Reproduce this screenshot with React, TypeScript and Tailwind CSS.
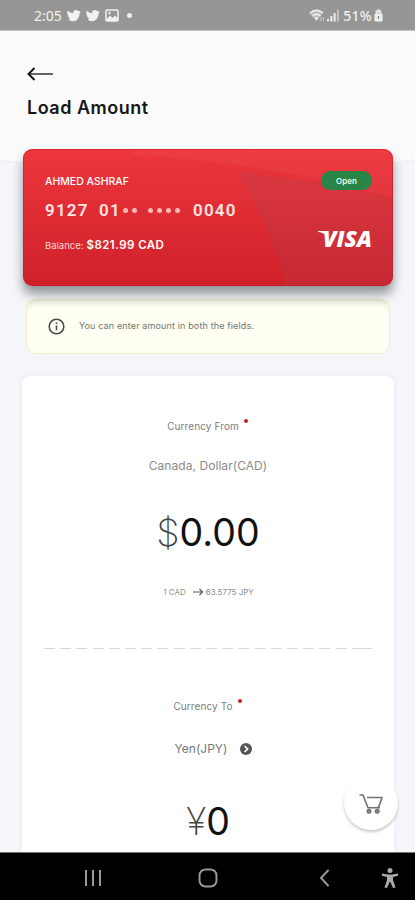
import type { ReactNode } from 'react'

interface FieldLabelProps {
  readonly children: ReactNode
}

const DASHES = Array.from({ length: 19 }, (_, index) => index)

export default function App() {
  return (
    <div className="relative isolate flex h-[900px] w-[415px] flex-col overflow-hidden bg-[#f4f6fa] font-['Inter',sans-serif]">
      <svg
        className="absolute left-0 top-[30px] -z-10"
        width="415"
        height="150"
        viewBox="0 0 415 150"
        fill="none"
      >
        <path d="M0 0H415V129Q208 162 0 129Z" fill="#fbfbfb" />
        <path d="M0 130Q208 163 415 130" stroke="#eeeff1" />
      </svg>

      <StatusBar />

      <header className="flex h-[118px] shrink-0 flex-col items-start pl-[27px] pt-[36px]">
        <button type="button" aria-label="Back">
          <svg width="28" height="14" viewBox="0 0 28 14" fill="none" stroke="#111">
            <path d="M2 7H26" strokeWidth="1.5" stroke="#333" />
            <path d="M7.5 1L1.5 7L7.5 13" strokeWidth="1.9" />
          </svg>
        </button>
        <h1 className="mt-[15px] whitespace-nowrap text-[18px] font-semibold leading-[24px] tracking-[0.5px] text-[#161616]">
          Load Amount
        </h1>
      </header>

      <BankCard />

      <div className="ml-[26px] mt-[12px] flex h-[56px] w-[364px] shrink-0 items-center rounded-[10px] border border-[#f2f0cf] bg-[#fffff4] pl-[21px] shadow-[inset_0_8px_9px_-7px_rgba(90,100,80,0.3)]">
        <svg width="17" height="17" viewBox="0 0 17 17" fill="none" stroke="#4d4c48">
          <circle cx="8.5" cy="8.5" r="7.3" strokeWidth="1.6" />
          <path d="M8.5 7.5V12.3" strokeWidth="1.6" />
          <path d="M8.5 4.4V6" strokeWidth="1.6" />
        </svg>
        <p className="ml-[14px] whitespace-nowrap text-[9px] leading-[14px] tracking-[0.14px] text-[#74746e]">
          You can enter amount in both the fields.
        </p>
      </div>

      <main className="ml-[22px] mt-[22px] flex h-[476px] w-[372px] shrink-0 flex-col items-center rounded-t-[8px] bg-white pt-[42px] shadow-[0_0_4px_rgba(225,228,240,0.6)]">
        <FieldLabel>Currency From</FieldLabel>
        <p className="mt-[24px] whitespace-nowrap text-[12px] leading-[16px] tracking-[0.06px] text-[#8b8b8b]">
          Canada, Dollar(CAD)
        </p>
        <p className="mt-[35px] flex h-[48px] items-center whitespace-nowrap text-[37.5px] leading-[48px] text-[#111]">
          <span className="font-extralight text-[#444]">$</span>
          <span className="tracking-[0.1px]">0.00</span>
        </p>
        <p className="mt-[25px] flex h-[20px] items-center whitespace-nowrap pl-[1px] text-[8px] text-[#8c8c8c]">
          1 CAD
          <svg className="ml-[6px] mr-[2px]" width="12" height="8" viewBox="0 0 12 8" fill="none" stroke="#555">
            <path d="M1 4H10.5M7.5 1L10.5 4L7.5 7" strokeWidth="1.1" />
          </svg>
          <span>63.5775 JPY</span>
        </p>

        <div className="mt-[46px] flex h-px w-[328px] shrink-0 justify-between">
          {DASHES.map(dash => (
            <span key={dash} className="h-px w-[11px] bg-[#d9d9d9]" />
          ))}
          <span className="h-px w-[20px] bg-[#d9d9d9]" />
        </div>

        <div className="mt-[49px]">
          <FieldLabel>Currency To</FieldLabel>
        </div>
        <button
          type="button"
          className="mt-[27px] flex h-[16px] items-center whitespace-nowrap pl-[11px] text-[12px] leading-[16px] tracking-[0.02px] text-[#777]"
        >
          Yen(JPY)
          <svg className="ml-[13px]" width="12" height="12" viewBox="0 0 12 12" fill="none">
            <circle cx="6" cy="6" r="6" fill="#555" />
            <path d="M4.6 3L7.6 6L4.6 9" stroke="#fff" strokeWidth="1.7" />
          </svg>
        </button>
        <p className="mt-[41px] flex h-[48px] items-center whitespace-nowrap text-[37.5px] leading-[48px] text-[#111]">
          <span className="font-extralight text-[#444]">¥</span>
          <span>0</span>
        </p>
      </main>

      <button
        type="button"
        aria-label="Cart"
        className="absolute left-[344px] top-[776px] grid h-[54px] w-[54px] place-items-center rounded-full bg-white pt-[2px] shadow-[0_2px_3px_rgba(0,0,0,0.22)]"
      >
        <svg width="26" height="22" viewBox="0 0 26 22" fill="none" stroke="#707070" strokeWidth="1.6">
          <path d="M1.5 2H5L10 14.8H22" strokeLinejoin="round" />
          <path d="M9 4.5H24L21.5 12L20 14.8" strokeLinejoin="round" />
          <circle cx="11" cy="18.3" r="1.7" fill="#999" />
          <circle cx="19.2" cy="18.3" r="1.7" fill="#999" />
        </svg>
      </button>

      <NavigationBar />
    </div>
  )
}

function StatusBar() {
  return (
    <div className="flex h-[31px] shrink-0 items-center border-b border-[#c5c5c5] bg-[#969696] pl-[34px] pr-[32px] pt-[1px] font-['Noto_Sans',sans-serif] text-[14px] text-[#f1f1f1]">
      <span>2:05</span>
      <BirdIcon />
      <BirdIcon />
      <svg className="ml-[5px]" width="14" height="13" viewBox="0 0 14 13" fill="none">
        <rect x="1" y="1" width="12" height="11" rx="1" stroke="#f1f1f1" strokeWidth="1.6" />
        <path d="M1 11L5 6.5L7.5 9L10 6.5L13 10V12H1Z" fill="#f1f1f1" />
        <circle cx="4.5" cy="4" r="1.2" fill="#f1f1f1" />
      </svg>
      <span className="ml-[8px] h-[5px] w-[5px] rounded-full bg-[#f1f1f1]" />

      <svg className="ml-auto" width="16" height="13" viewBox="0 0 16 13" fill="none">
        <path d="M0 4Q7 -3 14 4L7.5 12Z" fill="#bcbcbc" />
        <path d="M1 4Q7.5 -1.5 14 4M3.5 7Q7.5 3.5 11.5 7" stroke="#f1f1f1" strokeWidth="1.5" />
        <path d="M5.5 9L7.5 11.5L9.5 9Q7.5 7.5 5.5 9Z" fill="#f1f1f1" />
        <path d="M12 8V12M14.5 8V12" stroke="#ccc" />
      </svg>
      <svg className="ml-[2px]" width="12" height="13" viewBox="0 0 12 13" fill="#eee">
        <rect x="0" y="10" width="2" height="2.5" />
        <rect x="3.3" y="7" width="2" height="5.5" />
        <rect x="6.6" y="4" width="2" height="8.5" />
        <rect x="9.9" y="1" width="2" height="11.5" fill="#c4c4c4" />
      </svg>
      <span className="ml-[4px] font-medium tracking-[0.3px]">51%</span>
      <svg className="ml-[2px]" width="9" height="13" viewBox="0 0 9 13" fill="none">
        <path d="M3 0H6V1H7.5V5H1.5V1H3Z" fill="#c8c8c8" />
        <rect x="0.5" y="5" width="8" height="7.5" rx="1" fill="#f1f1f1" />
        <path d="M2.2 6V4Q4.5 0.5 6.8 4V6" stroke="#f1f1f1" strokeWidth="1.3" />
        <path d="M4.5 7V10" stroke="#888" strokeWidth="1.4" />
      </svg>
    </div>
  )
}

function BirdIcon() {
  return (
    <svg className="ml-[5px]" width="14" height="13" viewBox="0 0 14 13" fill="#f1f1f1">
      <path d="M.6 1.5C2.5 3.5 4.5 4.1 6 4.2C6.1 1.8 8 .7 9.8 1.2L11 1.8L13.7 2.8L12.5 4.4C12.6 8.4 9.7 12.2 5.6 12.2C3.8 12.2 2.8 11.6 1.8 10.6L3.4 9.7C2 9.2 1.2 8.2 1 6.8C.4 5.2 0 3.5.6 1.5Z" />
    </svg>
  )
}

function BankCard() {
  return (
    <section className="relative isolate ml-[23px] flex h-[137px] w-[370px] shrink-0 justify-between rounded-[9px] bg-linear-to-b from-[#ed363d] to-[#cf202a] pl-[22px] pr-[21px] text-white shadow-[0_8px_11px_rgba(25,30,40,0.45)]">
      <svg
        className="absolute inset-0 -z-10 rounded-[9px]"
        width="370"
        height="137"
        viewBox="0 0 370 137"
        fill="none"
      >
        <path d="M110 6Q250 14 370 49V0H110Z" fill="#ffffff" fillOpacity="0.035" />
        <path d="M214 23Q300 32 370 49V137H263Q247 75 214 23Z" fill="#a2525b" fillOpacity="0.19" />
        <rect x="0.5" y="0.5" width="369" height="136" rx="8.5" stroke="#c51824" strokeOpacity="0.55" />
      </svg>

      <div className="pt-[26px]">
        <p className="whitespace-nowrap text-[10.5px] font-medium leading-[14px]">AHMED ASHRAF</p>
        <div className="mt-[11px] flex h-[20px] items-center whitespace-nowrap font-['Roboto',sans-serif] text-[17px] font-semibold leading-[20px] tracking-[1.2px] text-[#ffe5e2]">
          <span className="w-[44px]">9127</span>
          <span className="ml-[10px] w-[22px]">01</span>
          <MaskDots count={2} />
          <span className="w-[9px]" />
          <MaskDots count={4} />
          <span className="ml-[13px]">0040</span>
        </div>
        <p className="mt-[18px] flex h-[16px] items-center whitespace-nowrap text-[9.5px]">
          <span className="text-[#ffd6d3]">Balance:</span>
          <strong className="ml-[3px] text-[11.5px] font-semibold tracking-[0.45px]">$821.99 CAD</strong>
        </p>
      </div>

      <div className="flex flex-col items-end pt-[22px]">
        <span className="grid h-[19px] w-[51px] place-items-center rounded-full bg-[#278548] text-[8px] font-semibold text-[#e8fff0]">
          Open
        </span>
        <div className="mt-[36px] flex h-[26px] items-center">
          <svg className="-mr-[4px] -mt-[12px]" width="9" height="5" viewBox="0 0 9 5">
            <path d="M0 0H7L9 5Q5 1.3 0 1Z" fill="#fff" />
          </svg>
          <span className="font-['Open_Sans',sans-serif] text-[22.5px] font-extrabold italic leading-[26px] tracking-[0px]">
            VISA
          </span>
        </div>
      </div>
    </section>
  )
}

function MaskDots({ count }: { readonly count: number }) {
  return (
    <span className="ml-[2px] flex gap-[4px]">
      {Array.from({ length: count }, (_, index) => (
        <span key={index} className="h-[5px] w-[5px] rounded-full bg-[#ffb9b5]" />
      ))}
    </span>
  )
}

function FieldLabel({ children }: FieldLabelProps) {
  return (
    <p className="flex h-[16px] items-center whitespace-nowrap pr-[1px] text-[10px] leading-[16px] tracking-[0.1px] text-[#7c7c7c]">
      {children}
      <span className="-mt-[11px] ml-[5px] h-[4px] w-[4px] rounded-full bg-[#c3201f]" />
    </p>
  )
}

function NavigationBar() {
  return (
    <nav className="flex h-[48px] shrink-0 items-center border-t border-[#777] bg-black pl-[84px] pt-[3px]">
      <svg width="18" height="18" viewBox="0 0 18 18" stroke="#999" strokeWidth="2">
        <path d="M2 1V17M9 1V17M16 1V17" />
      </svg>
      <svg className="ml-[96px]" width="20" height="20" viewBox="0 0 20 20" fill="none">
        <rect x="1.5" y="1.5" width="17" height="17" rx="6" stroke="#999" strokeWidth="2" />
      </svg>
      <svg className="ml-[101px]" width="11" height="18" viewBox="0 0 11 18" fill="none">
        <path d="M9.5 1L2 9L9.5 17" stroke="#999" strokeWidth="2" />
      </svg>
      <svg className="ml-[52px]" width="16" height="20" viewBox="0 0 16 20" fill="#aaa">
        <circle cx="8" cy="2.5" r="2.5" />
        <path d="M0 5.5L5.5 6.5H10.5L16 5.5V7.8L11 9V12L13.5 19.5L11 20L8.3 14H7.7L5 20L2.5 19.5L5 12V9L0 7.8Z" />
      </svg>
    </nav>
  )
}
